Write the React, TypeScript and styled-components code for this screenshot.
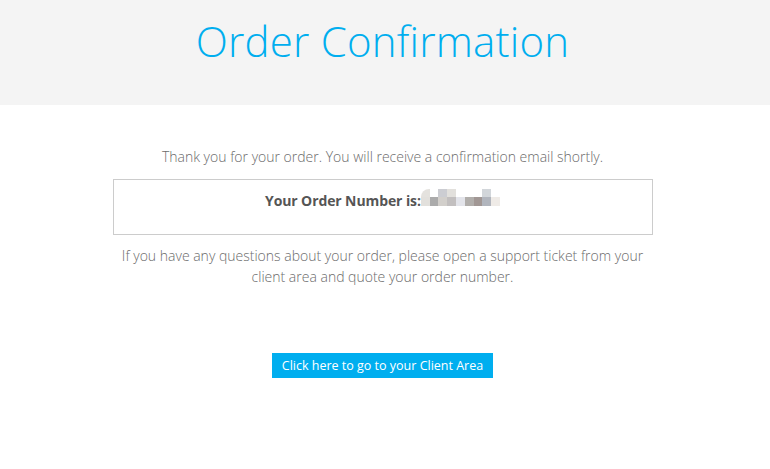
import React from "react";
import styled, { createGlobalStyle } from "styled-components";

const Global = createGlobalStyle`
  html, body { margin: 0; padding: 0; background: #ffffff; }
  body { font-family: "Open Sans", "Liberation Sans", sans-serif; }
`;

const Header = styled.header`
  height: 105px;
  background: #f4f4f4;
  display: flex;
  justify-content: center;
  padding-right: 5px;
  box-sizing: border-box;
`;

const Title = styled.h1`
  margin: 13px 0 0;
  font-weight: 300;
  font-size: 42px;
  line-height: 56px;
  color: #00aeef;
  letter-spacing: 0.2px;
`;

const Main = styled.main`
  display: flex;
  flex-direction: column;
  align-items: center;
  padding: 41px 5px 0 0;
`;

const Lead = styled.p`
  margin: 0;
  font-size: 14px;
  font-weight: 300;
  line-height: 22px;
  color: #6b6b6b;
`;

const OrderBox = styled.div`
  margin-top: 11px;
  width: 540px;
  height: 56px;
  box-sizing: border-box;
  border: 1px solid #cccccc;
  display: flex;
  justify-content: center;
  align-items: flex-start;
  padding-top: 10px;
`;

const OrderLabel = styled.strong`
  font-size: 14px;
  font-weight: 700;
  color: #555555;
  line-height: 22px;
  letter-spacing: -0.1px;
  display: flex;
  align-items: flex-start;
`;

const Mosaic = styled.span`
  display: grid;
  grid-template-columns: repeat(9, 8.8px);
  grid-template-rows: 8px 9px;
  margin-top: -1px;
  margin-left: 0;
`;

const Cell = styled.span<{ $c: string; $round?: boolean }>`
  background: ${(p) => p.$c};
  border-top-left-radius: ${(p) => (p.$round ? "8px" : "0")};
`;

const Note = styled.p`
  margin: 10px 0 0;
  width: 540px;
  text-align: center;
  font-size: 14px;
  font-weight: 300;
  line-height: 21px;
  color: #6b6b6b;
`;

const Button = styled.a`
  margin-top: 66px;
  display: inline-block;
  background: #00aeef;
  color: #ffffff;
  font-size: 12.5px;
  font-weight: 400;
  line-height: 25px;
  padding: 0 10px;
  text-decoration: none;
`;

const top = ["#e4e2de", "transparent", "#cccdd2", "#e2e0dc", "transparent", "transparent", "transparent", "#d2d6da", "transparent"];
const bottom = ["#e2e0dc", "#ababab", "#d2cfcb", "#c2bfbf", "#e3e4ea", "#b1aeab", "#a19794", "#b1b5bd", "#efebe7"];

export default function App() {
  return (
    <>
      <Global />
      <Header>
        <Title>Order Confirmation</Title>
      </Header>
      <Main>
        <Lead>Thank you for your order. You will receive a confirmation email shortly.</Lead>
        <OrderBox>
          <OrderLabel>
            Your Order Number is:
            <Mosaic>
              {top.map((c, i) => (
                <Cell key={"t" + i} $c={c} $round={i === 0} />
              ))}
              {bottom.map((c, i) => (
                <Cell key={"b" + i} $c={c} />
              ))}
            </Mosaic>
          </OrderLabel>
        </OrderBox>
        <Note>
          If you have any questions about your order, please open a support ticket from your client area and quote your order number.
        </Note>
        <Button href="#">Click here to go to your Client Area</Button>
      </Main>
    </>
  );
}
